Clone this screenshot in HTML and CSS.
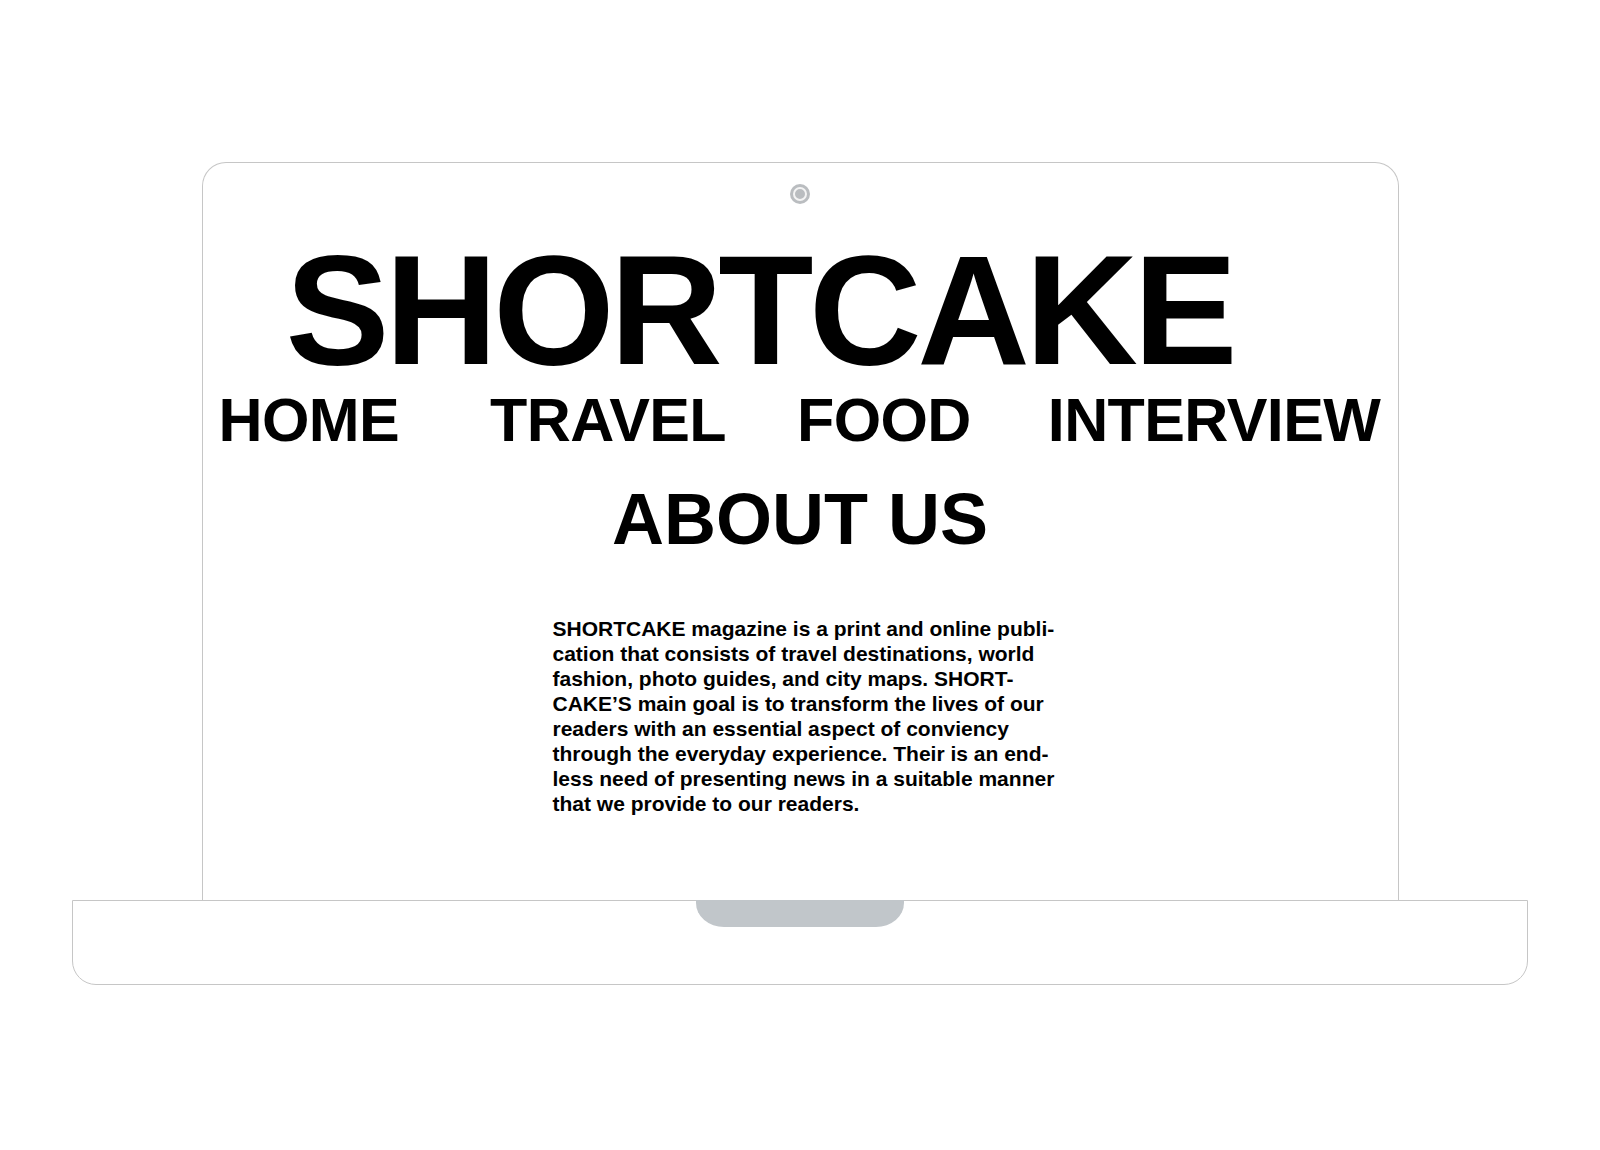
FILE: index.html
```html
<!DOCTYPE html>
<html lang="en">
<head>
<meta charset="utf-8">
<title>SHORTCAKE</title>
<link rel="stylesheet" href="styles.css">
</head>
<body>
<div class="laptop">
  <div class="screen">
    <div class="camera"></div>
    <h1 class="brand">SHORTCAKE</h1>
    <nav class="nav">
      <a class="nav-item nav-home">HOME</a>
      <a class="nav-item nav-travel">TRAVEL</a>
      <a class="nav-item nav-food">FOOD</a>
      <a class="nav-item nav-interview">INTERVIEW</a>
    </nav>
    <h2 class="about-title">ABOUT US</h2>
    <p class="about-text">SHORTCAKE magazine is a print and online publi-<br>cation that consists of travel destinations, world<br>fashion, photo guides, and city maps. SHORT-<br>CAKE’S main goal is to transform the lives of our<br>readers with an essential aspect of conviency<br>through the everyday experience. Their is an end-<br>less need of presenting news in a suitable manner<br>that we provide to our readers.</p>
  </div>
  <div class="base">
    <div class="notch"></div>
  </div>
</div>
</body>
</html>
```

FILE: styles.css
```css
* {
  box-sizing: border-box;
}

html, body {
  margin: 0;
  padding: 0;
  background: #ffffff;
}

body {
  font-family: "Liberation Sans", Arial, sans-serif;
  color: #000000;
  padding-top: 162px;
}

.laptop {
  width: 1456px;
  margin: 0 auto;
  display: flex;
  flex-direction: column;
  align-items: center;
}

.screen {
  width: 1197px;
  height: 738px;
  border: 1px solid #c6c6c6;
  border-bottom: none;
  border-radius: 24px 24px 0 0;
  display: flex;
  flex-direction: column;
}

.camera {
  align-self: center;
  width: 20px;
  height: 20px;
  margin-top: 21px;
  border-radius: 50%;
  background: #babdc0;
  display: flex;
  align-items: center;
  justify-content: center;
}

.camera::after {
  content: "";
  width: 10px;
  height: 10px;
  border-radius: 50%;
  background: #babdc0;
  border: 2.5px solid #f4f4f4;
}

.brand {
  margin: 28px 0 0 0;
  padding-left: 83px;
  font-size: 156px;
  line-height: 156px;
  font-weight: 700;
  letter-spacing: -4.5px;
}

.nav {
  display: flex;
  margin-top: 2px;
  padding-left: 16px;
}

.nav-item {
  font-size: 61px;
  line-height: 61px;
  font-weight: 700;
  letter-spacing: -0.6px;
  color: #000000;
  text-decoration: none;
}

.nav-travel {
  margin-left: 91px;
}

.nav-food {
  margin-left: 71px;
}

.nav-interview {
  margin-left: 77px;
}

.about-title {
  margin: 32px 0 0 0;
  text-align: center;
  font-size: 72px;
  line-height: 72px;
  font-weight: 700;
  padding-left: 0;
}

.about-text {
  margin: 61px 0 0 350px;
  font-size: 21px;
  line-height: 25px;
  font-weight: 700;
  white-space: nowrap;
}

.base {
  position: relative;
  width: 1456px;
  height: 85px;
  border: 1px solid #c6c6c6;
  border-radius: 0 0 24px 24px;
}

.notch {
  position: absolute;
  top: -1px;
  left: 623px;
  width: 208px;
  height: 27px;
  background: #c1c6ca;
  border-radius: 0 0 28px 28px / 0 0 24px 24px;
}
```
